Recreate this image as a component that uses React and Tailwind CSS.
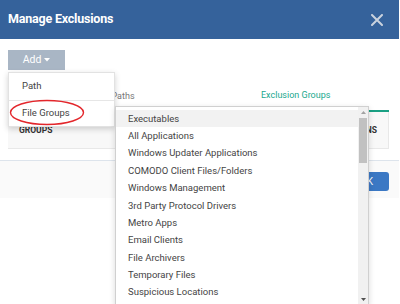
import React from "react";

const groups = [
  "Executables",
  "All Applications",
  "Windows Updater Applications",
  "COMODO Client Files/Folders",
  "Windows Management",
  "3rd Party Protocol Drivers",
  "Metro Apps",
  "Email Clients",
  "File Archivers",
  "Temporary Files",
  "Suspicious Locations",
];

const App = () => {
  return (
    <div className="relative w-[400px] h-[304px] overflow-hidden bg-white font-['Roboto',sans-serif]">
      {/* Dialog */}
      <div className="w-[399px] h-[198px] flex flex-col">
        <div className="h-[39px] bg-[#35629b] flex items-center justify-between pl-2 pr-[16px]">
          <span className="text-[12.5px] font-bold text-white tracking-[-0.2px]">
            Manage Exclusions
          </span>
          <svg width="12" height="12" viewBox="0 0 12 12">
            <path
              d="M1 1 L11 11 M11 1 L1 11"
              stroke="#c9d2de"
              strokeWidth="2"
              strokeLinecap="round"
            />
          </svg>
        </div>

        <div className="h-[121px] bg-white pl-2 pr-[10px] pt-[11px]">
          <button className="h-[20px] w-[57px] bg-[#a9b6c5] text-white text-[10.5px] flex items-center justify-center gap-[3px]">
            Add
            <svg width="6" height="4" viewBox="0 0 6 4">
              <path d="M0 0 L6 0 L3 3.5 Z" fill="#ffffff" />
            </svg>
          </button>

          <div className="mt-[16px] flex">
            <div className="w-[230px] h-[26px] pb-[4px] flex items-center justify-center text-[9px] text-[#777]">
              Paths
            </div>
            <div className="flex-1 h-[26px] pb-[4px] pl-[23px] flex items-center border-b-2 border-[#1aa083] text-[9px] text-[#22a88e]">
              Exclusion Groups
            </div>
          </div>

          <div className="h-[37px] bg-[#f8f8f8] border-b border-r border-[#e8e8e8] flex items-center justify-between pl-[11px] pr-[11px]">
            <span className="text-[8.5px] font-bold text-[#333]">GROUPS</span>
            <span className="text-[8.5px] font-bold text-[#333]">ACTIONS</span>
          </div>
        </div>

        <div className="h-[38px] bg-[#fafafa] border-t border-[#dde4ec] flex items-start justify-end pr-[10px] pt-[11px]">
          <button className="h-[19px] bg-[#3b78c4] rounded-[3px] text-white text-[10px] px-4">
            OK
          </button>
        </div>
      </div>

      {/* Add menu */}
      <div className="absolute left-[8px] top-[72px] w-[107px] bg-white border border-[#e2e2e2] shadow-[0_2px_6px_rgba(0,0,0,0.18)]">
        <div className="h-[27px] pl-[13px] flex items-center text-[9.5px] text-[#444]">
          Path
        </div>
        <div className="h-[26px] pl-[13px] flex items-center border-t border-[#e6e6e6] text-[9.5px] text-[#444]">
          File Groups
        </div>
      </div>

      <svg
        className="absolute left-[9px] top-[99px]"
        width="76"
        height="27"
        viewBox="0 0 76 27"
      >
        <ellipse
          cx="38"
          cy="13.5"
          rx="36.5"
          ry="12"
          fill="none"
          stroke="#e3262b"
          strokeWidth="1.4"
        />
      </svg>

      {/* File groups list */}
      <div className="absolute left-[115px] top-[106px] w-[254px] h-[200px] flex bg-white border border-[#d0d0d0] shadow-[0_2px_6px_rgba(0,0,0,0.15)]">
        <div className="flex-1 pt-[3px] overflow-hidden">
          {groups.map((g, i) => (
            <div
              key={g}
              className={`h-[17.4px] pl-[12px] flex items-center text-[9.5px] text-[#444] whitespace-nowrap ${
                i === 0 ? "bg-[#f2f2f2]" : ""
              }`}
            >
              {g}
            </div>
          ))}
        </div>
        <div className="w-[10px] bg-[#f1f1f1] flex flex-col">
          <div className="h-[11px] flex items-center justify-center">
            <svg width="5" height="3" viewBox="0 0 5 3">
              <path d="M0 3 L5 3 L2.5 0 Z" fill="#a3a3a3" />
            </svg>
          </div>
          <div className="h-[45px] mx-[1px] bg-[#c1c1c1]" />
          <div className="flex-1" />
          <div className="h-[11px] flex items-center justify-center">
            <svg width="5" height="3" viewBox="0 0 5 3">
              <path d="M0 0 L5 0 L2.5 3 Z" fill="#505050" />
            </svg>
          </div>
        </div>
      </div>
    </div>
  );
};

export default App;
